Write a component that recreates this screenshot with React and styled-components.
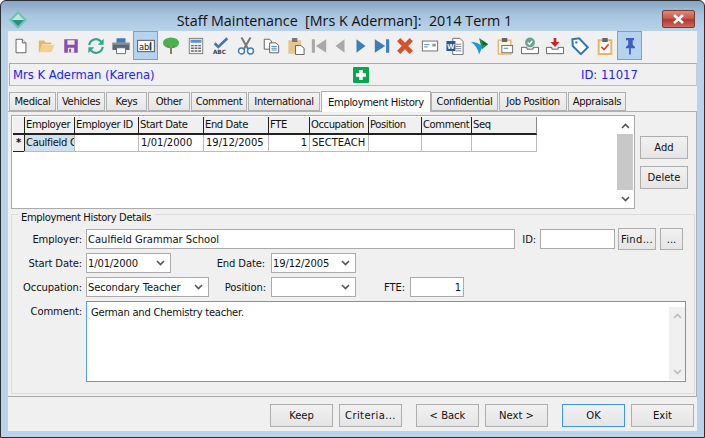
import React from "react";
import styled, { createGlobalStyle } from "styled-components";

const GlobalStyle = createGlobalStyle`
  html, body { margin: 0; padding: 0; background: #fff; }
  body { font-family: "DejaVu Sans", Verdana, sans-serif; font-size: 10px; color: #111; }
  * { box-sizing: border-box; }
`;

const Window = styled.div`
  width: 705px;
  height: 438px;
  display: flex;
  flex-direction: column;
  border: 1px solid #2b2f33;
  border-radius: 6px 6px 0 0;
  background: linear-gradient(180deg, #87a6c4 0, #a8c4de 14px, #b9d3ea 31px);
  overflow: hidden;
`;

const TitleBar = styled.div`
  height: 30px;
  flex: none;
  position: relative;
  display: flex;
  align-items: center;
  justify-content: center;
  padding-right: 16px;
`;

const AppIcon = styled.svg`
  position: absolute;
  left: 8px;
  top: 10px;
`;

const Title = styled.div`
  font-family: "Open Sans", sans-serif;
  font-size: 14.3px;
  color: #111;
  white-space: pre;
  margin-top: 8px;
`;

const CloseButton = styled.div`
  position: absolute;
  right: 9px;
  top: 9px;
  width: 33px;
  height: 18px;
  border: 1px solid #7a3a35;
  border-radius: 2px;
  background: linear-gradient(180deg, #d98a80 0, #c9584e 45%, #b5362c 55%, #cc6a60 100%);
  display: flex;
  align-items: center;
  justify-content: center;
`;

const Client = styled.div`
  flex: 1;
  margin: 0 7px 6px;
  background: #f0f0f0;
  display: flex;
  flex-direction: column;
  min-height: 0;
`;

const Toolbar = styled.div`
  height: 32px;
  flex: none;
  display: flex;
`;

const ToolButton = styled.div`
  width: ${(p) => (p.$narrow ? "21px" : "25px")};
  height: 29px;
  flex: none;
  display: flex;
  align-items: center;
  justify-content: center;
  padding-top: 1px;
  background: ${(p) => (p.$active ? "#b5d2ee" : "transparent")};
  border: 1px solid ${(p) => (p.$active ? "#6ba3dc" : "transparent")};
`;

const InfoBar = styled.div`
  height: 23px;
  flex: none;
  margin-left: 1px;
  border: 1px solid #aaa;
  border-right-color: #ccc;
  border-bottom-color: #bbb;
  display: grid;
  grid-template-columns: 340px 228px 1fr;
  align-items: center;
  padding-left: 3px;
  color: #2020ff;
  font-size: 11.6px;
`;

const Plus = styled.div`
  width: 16px;
  height: 16px;
  background: #0aa550;
  display: flex;
  align-items: center;
  justify-content: center;
  border-radius: 1px;
`;

const Tabs = styled.div`
  flex: none;
  height: 20px;
  margin-top: 5px;
  margin-left: 1px;
  display: flex;
  align-items: flex-end;
  position: relative;
  z-index: 1;
`;

const Tab = styled.div`
  width: ${(p) => p.$w}px;
  height: ${(p) => (p.$active ? "21px" : "19px")};
  margin-right: ${(p) => (p.$active ? "0" : "1px")};
  margin-bottom: ${(p) => (p.$active ? "-1px" : "0")};
  border: 1px solid #b0b0b0;
  border-bottom: ${(p) => (p.$active ? "none" : "1px solid #b0b0b0")};
  background: ${(p) => (p.$active ? "#fff" : "linear-gradient(180deg, #f2f2f2, #e6e6e6)")};
  display: flex;
  align-items: center;
  justify-content: center;
  white-space: nowrap;
  letter-spacing: -0.35px;
`;

const Panel = styled.div`
  height: 286px;
  flex: none;
  border-top: 1px solid #b0b0b0;
  border-right: 1px solid #b0b0b0;
  border-bottom: 1px solid #a8a8a8;
  padding: 3px 1px 2px 3px;
  display: flex;
  flex-direction: column;
  background: #f0f0f0;
`;

const GridRow = styled.div`
  display: flex;
  height: 94px;
  flex: none;
`;

const Grid = styled.div`
  width: 624px;
  height: 94px;
  border: 1px solid #aaa;
  background: #fff;
  padding: 1px;
  display: flex;
`;

const GridBody = styled.div`
  flex: 1;
`;

const HeadRow = styled.div`
  display: flex;
  height: 18px;
  background: #f0f0f0;
  width: 524px;
  border-bottom: 2px solid #222;
  border-right: 1px solid #888;
`;

const HeadCell = styled.div`
  width: ${(p) => p.$w}px;
  padding-left: 1px;
  line-height: 15px;
  letter-spacing: -0.4px;
  border-left: ${(p) => (p.$first ? "none" : "1px solid #222")};
  white-space: nowrap;
  overflow: hidden;
`;

const DataRow = styled.div`
  display: flex;
  height: 17px;
  width: 524px;
  border-bottom: 1px solid #bbb;
  border-right: 1px solid #bbb;
`;

const DataCell = styled.div`
  width: ${(p) => p.$w}px;
  padding: 0 2px 0 2px;
  line-height: 15px;
  border-left: 1px solid #bbb;
  background: ${(p) => (p.$selected ? "#cfe0f1" : "transparent")};
  text-align: ${(p) => (p.$right ? "right" : "left")};
  white-space: nowrap;
  overflow: hidden;
`;

const ClippedCell = styled(DataCell)`
  padding: 0 0 0 1px;
  letter-spacing: -0.3px;
  border-left-color: #222;
`;

const RowMarker = styled.div`
  width: 11px;
  height: 17px;
  text-align: center;
  line-height: 15px;
  font-weight: bold;
  background: #f0f0f0;
  border-bottom: 1px solid #222;
`;

const ScrollBar = styled.div`
  width: 16px;
  flex: none;
  display: flex;
  flex-direction: column;
  background: ${(p) => p.$bg || "#fff"};
`;

const ScrollArrow = styled.div`
  height: 17px;
  flex: none;
  display: flex;
  align-items: center;
  justify-content: center;
`;

const ScrollTrack = styled.div`
  flex: 1;
  background: ${(p) => p.$fill || "transparent"};
`;

const SideButtons = styled.div`
  margin-left: 5px;
  padding-top: 21px;
  display: flex;
  flex-direction: column;
  gap: 7px;
`;

const Button = styled.div`
  width: ${(p) => p.$w}px;
  height: ${(p) => p.$h || 23}px;
  flex: none;
  margin-left: ${(p) => p.$ml || 0}px;
  margin-top: ${(p) => p.$mt || 0}px;
  border: 1px solid ${(p) => (p.$focus ? "#3f95e8" : "#aeaeae")};
  background: linear-gradient(180deg, #f1f1f1, #e5e5e5);
  display: flex;
  align-items: center;
  justify-content: center;
  white-space: nowrap;
  letter-spacing: ${(p) => p.$ls || 0}px;
`;

const Group = styled.div`
  margin-top: 5px;
  height: 181px;
  width: 684px;
  border: 1px solid #dcdcdc;
  position: relative;
  padding: 14px 0 0 0;
  display: flex;
  flex-direction: column;
`;

const GroupLabel = styled.div`
  position: absolute;
  left: 6px;
  top: -3px;
  padding: 0 3px;
  line-height: 11px;
  letter-spacing: -0.38px;
  background: #f0f0f0;
`;

const FormRow = styled.div`
  display: flex;
  align-items: flex-start;
  height: ${(p) => p.$h || 20}px;
  margin-bottom: 4px;
`;

const Label = styled.div`
  width: ${(p) => p.$w}px;
  flex: none;
  text-align: right;
  line-height: 21px;
  letter-spacing: -0.12px;
  padding-right: ${(p) => (p.$pr === undefined ? 4 : p.$pr)}px;
  white-space: nowrap;
`;

const Input = styled.div`
  width: ${(p) => p.$w}px;
  height: 20px;
  flex: none;
  border: 1px solid #aaa;
  background: #fff;
  line-height: 19px;
  padding: 0 2px 0 1px;
  text-align: ${(p) => (p.$right ? "right" : "left")};
  white-space: nowrap;
`;

const Select = styled(Input)`
  display: flex;
  justify-content: space-between;
  align-items: center;
  padding-right: 5px;
  letter-spacing: -0.15px;
`;

const CommentBox = styled.div`
  width: 600px;
  height: 81px;
  flex: none;
  border: 1px solid #569de5;
  background: #fff;
  display: flex;
  justify-content: space-between;
  padding: 5px 0 1px 4px;
  letter-spacing: -0.25px;
`;

const Footer = styled.div`
  flex: 1;
  display: flex;
  padding: 7px 0 0 262px;
`;

const Chevron = ({ up, color = "#555" }) => (
  <svg width="9" height="6" viewBox="0 0 9 6">
    <path d={up ? "M1 5 L4.5 1.5 L8 5" : "M1 1 L4.5 4.5 L8 1"} fill="none" stroke={color} strokeWidth="1.6" />
  </svg>
);

const Svg = ({ children }) => (
  <svg width="18" height="18" viewBox="0 0 20 20">{children}</svg>
);

const icons = {
  newDoc: (
    <Svg>
      <path d="M4.5 2.5h7l4 4v11h-11z" fill="#fff" stroke="#555" />
      <path d="M11.5 2.5v4h4" fill="#eee" stroke="#555" />
    </Svg>
  ),
  open: (
    <Svg>
      <path d="M2 4h6l1.5 2H16v2H6L3 17H2z" fill="#e8b565" />
      <path d="M5.5 8.5H19.5L16 17H2.5z" fill="#f6cf8e" />
    </Svg>
  ),
  save: (
    <Svg>
      <path d="M2.5 2.5h15v15h-15z" fill="#8a4fab" />
      <path d="M6 3.5h8v5H6z" fill="#efe7f3" />
      <path d="M6.5 12h7v5.5h-7z" fill="#efe7f3" />
      <path d="M8 13h2v4H8z" fill="#8a4fab" />
    </Svg>
  ),
  refresh: (
    <Svg>
      <path d="M2.5 9a7.5 7.5 0 0 1 13-4" fill="none" stroke="#2fa58a" strokeWidth="2.4" />
      <path d="M17.5 11a7.5 7.5 0 0 1-13 4" fill="none" stroke="#2fa58a" strokeWidth="2.4" />
      <path d="M18.5 2v6.5h-6.5z" fill="#2fa58a" />
      <path d="M1.5 18v-6.5h6.5z" fill="#2fa58a" />
    </Svg>
  ),
  print: (
    <Svg>
      <path d="M5 1.5h10v5H5z" fill="#3f7db8" />
      <path d="M0.5 6.5h19v8h-19z" fill="#5b6772" />
      <path d="M0.5 6.5h19v2h-19z" fill="#8792a0" />
      <path d="M5 12h10v6.5H5z" fill="#fff" stroke="#5b6772" />
    </Svg>
  ),
  abl: (
    <svg width="18" height="14" viewBox="0 0 20 16">
      <rect x="0.5" y="1.5" width="19" height="13" fill="#fff" stroke="#444" />
      <text x="2" y="12" fontSize="9.5" fontFamily="DejaVu Sans" fill="#222">ab</text>
      <path d="M15.5 3v10" stroke="#111" strokeWidth="1.2" />
      <text x="13" y="12" fontSize="9.5" fontFamily="DejaVu Sans" fill="#222">l</text>
    </svg>
  ),
  tree: (
    <Svg>
      <path d="M9 10h2v9H9z" fill="#8a6a48" />
      <ellipse cx="10" cy="6.5" rx="9" ry="6" fill="#4cb050" />
      <path d="M8 12 L5.5 9.5M12 12l2.5-2.5" stroke="#8a6a48" />
    </Svg>
  ),
  calc: (
    <Svg>
      <rect x="2.5" y="1.5" width="15" height="17" fill="#f2f2f2" stroke="#777" />
      <path d="M4 3h12v3.5H4z" fill="#5b93c9" />
      <path d="M4.5 9.5h3M8.5 9.5h3M12.5 9.5h3M4.5 12.5h3M8.5 12.5h3M12.5 12.5h3M4.5 15.5h3M8.5 15.5h3M12.5 15.5h3" stroke="#666" strokeWidth="1.5" />
    </Svg>
  ),
  spell: (
    <Svg>
      <path d="M3 7l4 4 10-9.5" fill="none" stroke="#3f77b5" strokeWidth="3" />
      <text x="1" y="19" fontSize="6.4" fontFamily="DejaVu Sans" fontWeight="bold" fill="#444">ABC</text>
    </Svg>
  ),
  cut: (
    <Svg>
      <path d="M5 0.5l7.5 13M15 0.5L7.5 13.5" stroke="#777" strokeWidth="2.2" />
      <circle cx="5" cy="15.5" r="3.3" fill="#fff" stroke="#3f7db8" strokeWidth="1.6" />
      <circle cx="15" cy="15.5" r="3.3" fill="#fff" stroke="#3f7db8" strokeWidth="1.6" />
    </Svg>
  ),
  copy: (
    <Svg>
      <path d="M2.5 2.5h6l2 2v9h-8z" fill="#fff" stroke="#555" />
      <path d="M8.5 6.5h7l3 3v8h-10z" fill="#fff" stroke="#555" />
      <path d="M10.5 10.5h6M10.5 12.5h6M10.5 14.5h6" stroke="#3f7db8" />
    </Svg>
  ),
  paste: (
    <Svg>
      <path d="M1.5 3.5h14v15h-14z" fill="#e8c48c" />
      <path d="M5.5 1h6v4.5h-6z" fill="#777" />
      <path d="M9.5 9.5h6l3.5 3v7h-9.5z" fill="#fff" stroke="#555" />
    </Svg>
  ),
  first: (
    <Svg>
      <path d="M2 2.5h3.5v15H2zM18 2.5v15L6.5 10z" fill="#a9a9a9" />
    </Svg>
  ),
  prev: (
    <Svg>
      <path d="M15 2.5v15L5 10z" fill="#a9a9a9" />
    </Svg>
  ),
  next: (
    <Svg>
      <path d="M5 2.5v15L15 10z" fill="#3f7db8" />
    </Svg>
  ),
  last: (
    <Svg>
      <path d="M2 2.5v15L13.5 10zM14.5 2.5H18v15h-3.5z" fill="#3f7db8" />
    </Svg>
  ),
  remove: (
    <Svg>
      <path d="M3 3l14 14M17 3L3 17" stroke="#d6502b" strokeWidth="5" />
    </Svg>
  ),
  card: (
    <Svg>
      <rect x="1.5" y="4.5" width="17" height="11" fill="#fff" stroke="#666" />
      <path d="M3.5 8.5h6M3.5 11h4" stroke="#3f7db8" />
      <path d="M12.5 7.5h4v3h-4z" fill="#999" />
    </Svg>
  ),
  word: (
    <Svg>
      <path d="M7.5 1.5h8l3.5 3.5v14.5H7.5z" fill="#fff" stroke="#666" />
      <path d="M11 8h6M11 10.5h6M11 13h6M11 15.5h6" stroke="#777" />
      <path d="M0.5 4.5h10v11h-10z" fill="#2b579a" />
      <text x="1.5" y="13.5" fontSize="8.5" fontWeight="bold" fontFamily="Liberation Sans" fill="#fff">W</text>
    </Svg>
  ),
  send: (
    <Svg>
      <path d="M9 1l10 7-7 6z" fill="#1f8f52" />
      <path d="M0 5.5c6 0 10 2 12.5 5.5L9 19.5C8 13.5 5 9 0 5.5z" fill="#1e9bd7" />
      <path d="M12 3.5l7 4.5-5.5 1z" fill="#0f5f38" />
    </Svg>
  ),
  clipCard: (
    <Svg>
      <path d="M2.5 3.5h14v15.5h-14z" fill="#fbf3e2" stroke="#e2b36e" strokeWidth="1.5" />
      <path d="M6.5 1h6v4.5h-6z" fill="#666" />
      <rect x="6.5" y="9.5" width="12" height="8" fill="#fff" stroke="#666" />
      <path d="M8.5 12.5h5" stroke="#3f7db8" />
    </Svg>
  ),
  trayCheck: (
    <Svg>
      <circle cx="10" cy="6" r="5.5" fill="#6aa58f" />
      <path d="M7.5 6l2 2 3-3.5" fill="none" stroke="#fff" strokeWidth="1.5" />
      <path d="M0.5 11.5h6v2h7v-2h6v7h-19z" fill="#fff" stroke="#555" />
    </Svg>
  ),
  trayDown: (
    <Svg>
      <path d="M8.5 1h3v4.5h3.5L10 11 5 5.5h3.5z" fill="#c6282a" />
      <path d="M0.5 11.5h6v2h7v-2h6v7h-19z" fill="#fff" stroke="#555" />
    </Svg>
  ),
  tag: (
    <Svg>
      <path d="M1.5 2.5L9 1.5l9.5 10-7.5 7.5L2 10z" fill="#fff" stroke="#2e75bb" strokeWidth="2.2" />
      <circle cx="6" cy="6" r="1.3" fill="#2e75bb" />
    </Svg>
  ),
  clipCheck: (
    <Svg>
      <path d="M3 3.5h14v15.5H3z" fill="#fff" stroke="#e8b565" strokeWidth="2.2" />
      <path d="M7 1h6v4.5H7z" fill="#666" />
      <path d="M6 11l3 3 5-6" fill="none" stroke="#d6402b" strokeWidth="1.8" />
    </Svg>
  ),
  pin: (
    <Svg>
      <path d="M5.5 1h9v2.500h-1.500v5l2.500 2.500v1.500h-10V11L8 8.500v-5H5.500z" fill="#3f5fc0" />
      <path d="M9 12h2v7.500H9z" fill="#3f5fc0" />
    </Svg>
  ),
};

const toolItems = [
  { id: "newDoc" }, { id: "open" }, { id: "save" }, { id: "refresh" }, { id: "print" },
  { id: "abl", active: true }, { id: "tree" }, { id: "calc" }, { id: "spell" }, { id: "cut" },
  { id: "copy" }, { id: "paste" },
  { id: "first", narrow: true }, { id: "prev", narrow: true }, { id: "next", narrow: true }, { id: "last", narrow: true },
  { id: "remove" }, { id: "card" }, { id: "word" }, { id: "send" }, { id: "clipCard" },
  { id: "trayCheck" }, { id: "trayDown" }, { id: "tag" }, { id: "clipCheck" }, { id: "pin", active: true },
];

const tabItems = [
  ["Medical", 47], ["Vehicles", 48], ["Keys", 41], ["Other", 42], ["Comment", 56], ["International", 72],
  ["Employment History", 110, true], ["Confidential", 67], ["Job Position", 68], ["Appraisals", 58],
];

const columns = [
  ["Employer", 50], ["Employer ID", 64], ["Start Date", 65], ["End Date", 65], ["FTE", 41],
  ["Occupation", 59], ["Position", 53], ["Comment", 50], ["Seq", 65],
];

const App = () => {
  return (
    <>
      <GlobalStyle />
      <Window>
        <TitleBar>
          <AppIcon width="18" height="18" viewBox="0 0 18 18">
            <path d="M9 0l9 9-9 9-9-9z" fill="#6fc3b4" />
            <path d="M9 3l6 6H3z" fill="#bfe6dc" />
            <path d="M3 9h12l-6 6z" fill="#2f8f7a" />
          </AppIcon>
          <Title>{"Staff Maintenance  [Mrs K Aderman]:  2014 Term 1"}</Title>
          <CloseButton>
            <svg width="13" height="10" viewBox="0 0 13 10">
              <path d="M2 1l9 8M11 1l-9 8" stroke="#fff" strokeWidth="2.6" />
            </svg>
          </CloseButton>
        </TitleBar>
        <Client>
          <Toolbar>
            {toolItems.map((t) => (
              <ToolButton key={t.id} $active={t.active} $narrow={t.narrow}>{icons[t.id]}</ToolButton>
            ))}
          </Toolbar>
          <InfoBar>
            <span>Mrs K Aderman (Karena)</span>
            <Plus>
              <svg width="10" height="10" viewBox="0 0 10 10">
                <path d="M3.2 0h3.6v3.2H10v3.6H6.800V10H3.200V6.800H0V3.200h3.200z" fill="#fff" />
              </svg>
            </Plus>
            <span>ID: 11017</span>
          </InfoBar>
          <Tabs>
            {tabItems.map(([label, w, active]) => (
              <Tab key={label} $w={w} $active={active}>{label}</Tab>
            ))}
          </Tabs>
          <Panel>
            <GridRow>
              <Grid>
                <GridBody>
                  <HeadRow>
                    <HeadCell $w={11} $first />
                    {columns.map(([label, w]) => (
                      <HeadCell key={label} $w={w}>{label}</HeadCell>
                    ))}
                  </HeadRow>
                  <DataRow>
                    <RowMarker>*</RowMarker>
                    <ClippedCell $w={50} $selected>Caulfield G</ClippedCell>
                    <DataCell $w={64} />
                    <DataCell $w={65}>1/01/2000</DataCell>
                    <DataCell $w={65}>19/12/2005</DataCell>
                    <DataCell $w={41} $right>1</DataCell>
                    <DataCell $w={59}>SECTEACH</DataCell>
                    <DataCell $w={53} />
                    <DataCell $w={50} />
                    <DataCell $w={65} />
                  </DataRow>
                </GridBody>
                <ScrollBar>
                  <ScrollArrow><Chevron up /></ScrollArrow>
                  <ScrollTrack $fill="#c8c8c8" />
                  <ScrollArrow><Chevron /></ScrollArrow>
                </ScrollBar>
              </Grid>
              <SideButtons>
                <Button $w={48}>Add</Button>
                <Button $w={48}>Delete</Button>
              </SideButtons>
            </GridRow>
            <Group>
              <GroupLabel>Employment History Details</GroupLabel>
              <FormRow>
                <Label $w={74}>Employer:</Label>
                <Input $w={429}>Caulfield Grammar School</Input>
                <Label $w={25}>ID:</Label>
                <Input $w={75} />
                <Button $w={38} $h={22} $ml={3} $mt={-1} $ls={0.3}>Find...</Button>
                <Button $w={23} $h={22} $ml={4} $mt={-1}>...</Button>
              </FormRow>
              <FormRow>
                <Label $w={74}>Start Date:</Label>
                <Select $w={85}>1/01/2000<Chevron /></Select>
                <Label $w={100} $pr={6}>End Date:</Label>
                <Select $w={85}>19/12/2005<Chevron /></Select>
              </FormRow>
              <FormRow>
                <Label $w={74}>Occupation:</Label>
                <Select $w={123}>Secondary Teacher<Chevron /></Select>
                <Label $w={62} $pr={5}>Position:</Label>
                <Select $w={85}><span /><Chevron /></Select>
                <Label $w={54} $pr={5}>FTE:</Label>
                <Input $w={54} $right>1</Input>
              </FormRow>
              <FormRow $h={81}>
                <Label $w={74}>Comment:</Label>
                <CommentBox>
                  <span>German and Chemistry teacher.</span>
                  <ScrollBar $bg="#f0f0f0">
                    <ScrollArrow><Chevron up color="#bbb" /></ScrollArrow>
                    <ScrollTrack />
                    <ScrollArrow><Chevron color="#bbb" /></ScrollArrow>
                  </ScrollBar>
                </CommentBox>
              </FormRow>
            </Group>
          </Panel>
          <Footer>
            <Button $w={63}>Keep</Button>
            <Button $w={63} $ml={6} $ls={0.4}>Criteria...</Button>
            <Button $w={63} $ml={14}>&lt; Back</Button>
            <Button $w={63} $ml={6}>Next &gt;</Button>
            <Button $w={63} $ml={14} $focus>OK</Button>
            <Button $w={63} $ml={6}>Exit</Button>
          </Footer>
        </Client>
      </Window>
    </>
  );
};

export default App;
